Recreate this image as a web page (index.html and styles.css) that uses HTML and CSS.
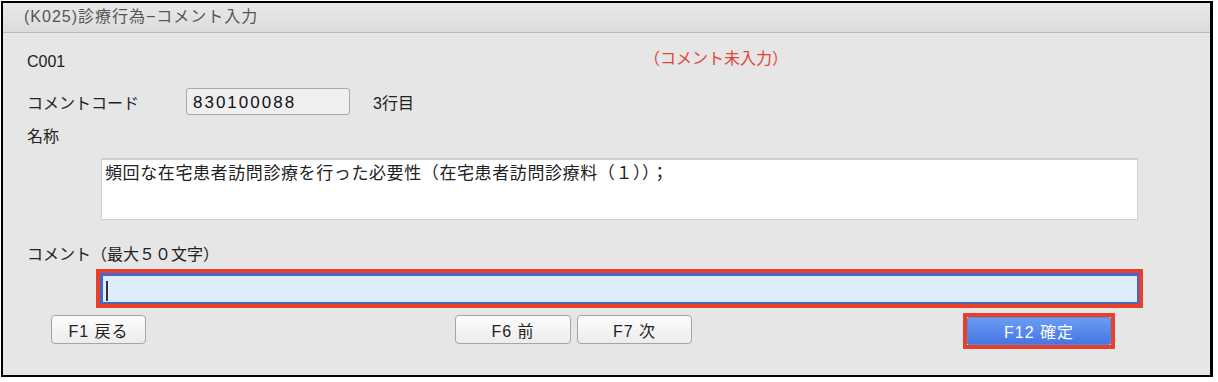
FILE: index.html
```html
<!DOCTYPE html>
<html lang="ja">
<head>
  <meta charset="UTF-8">
  <meta name="viewport" content="width=device-width, initial-scale=1.0">
  <title>(K025)診療行為−コメント入力</title>
  <link rel="stylesheet" href="styles.css">
</head>
<body>
  <div class="window">
    <!-- タイトルバー -->
    <div class="title-bar">(K025)診療行為−コメント入力</div>

    <div class="content">
      <div class="row row-code">
        <span class="code-id">C001</span>
        <span class="warn">（コメント未入力）</span>
      </div>

      <div class="row row-comment-code">
        <span class="label">コメントコード</span>
        <input type="text" class="code-input" value="830100088" readonly>
        <span class="line-no">3行目</span>
      </div>

      <div class="row row-name">
        <span class="label">名称</span>
      </div>
      <div class="name-box">頻回な在宅患者訪問診療を行った必要性（在宅患者訪問診療料（１））；</div>

      <div class="row row-comment">
        <span class="label">コメント（最大５０文字）</span>
      </div>
      <div class="comment-wrap">
        <div class="comment-input"><span class="caret"></span></div>
      </div>

      <!-- ファンクションキー -->
      <div class="buttons">
        <button class="btn btn-back">F1 戻る</button>
        <button class="btn btn-prev">F6 前</button>
        <button class="btn btn-next">F7 次</button>
        <div class="confirm-wrap">
          <button class="btn-confirm">F12 確定</button>
        </div>
      </div>
    </div>
  </div>
</body>
</html>
```

FILE: styles.css
```css
* {
  box-sizing: border-box;
}
body {
  margin: 0;
  background: #fff;
  font-family: "Liberation Sans", "Noto Sans CJK JP", sans-serif;
  font-size: 16px;
  color: #222;
}
/* ウィンドウ枠 */
.window {
  margin: 1px 0 0 1px;
  width: 1212px;
  height: 376px;
  border: 2px solid #000;
  border-right-width: 3px;
  background: #e6e6e6;
  overflow: hidden;
}
.title-bar {
  height: 30px;
  line-height: 28px;
  padding-left: 21px;
  font-size: 16px;
  letter-spacing: 1px;
  color: #555;
  background: linear-gradient(#e9e9e9, #dcdcdc);
  border-bottom: 1px solid #b9b9b9;
}
.content {
  padding-left: 24px;
}
.row {
  display: flex;
  align-items: center;
}
.row-code {
  height: 30px;
  margin-top: 14px;
}
.code-id {
  width: 617px;
}
.warn {
  color: #e4433a;
  margin-bottom: 10px;
}
.label {
  width: 159px;
  flex: none;
}
.row-comment-code {
  height: 27px;
  margin-top: 11px;
}
.code-input {
  width: 164px;
  height: 27px;
  padding: 2px 6px 0;
  font-family: inherit;
  font-size: 17px;
  letter-spacing: 2px;
  color: #111;
  background: #efefef;
  border: 1px solid #a9a9a9;
  border-radius: 3px;
}
.line-no {
  margin-left: 23px;
}
.row-name {
  height: 20px;
  margin-top: 10px;
}
.row-comment .label {
  width: auto;
}
/* 名称表示欄 */
.name-box {
  margin: 13px 0 0 74px;
  width: 1037px;
  height: 62px;
  padding: 3px 3px;
  font-size: 17px;
  letter-spacing: 0.6px;
  line-height: 22px;
  background: #fff;
  border: 2px solid #cfcfcf;
  border-width: 2px 1px 1px 1px;
}
.row-comment {
  height: 20px;
  margin-top: 23px;
}
/* コメント入力欄 */
.comment-wrap {
  margin: 6px 0 0 69px;
  width: 1047px;
  height: 39px;
  border: 4px solid #e8412b;
}
.comment-input {
  height: 100%;
  padding: 5px 0 0 3px;
  background: #deebfb;
  border: 2px solid #4468c9;
  border-width: 3px 2px 2px 3px;
}
.caret {
  display: block;
  width: 2px;
  height: 20px;
  background: #333;
}
/* ボタン */
.buttons {
  display: flex;
  align-items: flex-start;
  margin-top: 7px;
}
.btn {
  height: 29px;
  padding: 0;
  font-family: inherit;
  font-size: 16px;
  letter-spacing: 1px;
  color: #222;
  background: linear-gradient(#fdfdfd, #ececec);
  border: 1px solid #a5a5a5;
  border-radius: 4px;
}
.btn-back {
  width: 95px;
  margin-left: 24px;
}
.btn-prev {
  width: 116px;
  margin-left: 309px;
}
.btn-next {
  width: 115px;
  margin-left: 6px;
}
.confirm-wrap {
  margin: -2px 0 0 271px;
  width: 152px;
  height: 36px;
  border: 4px solid #e8412b;
}
.btn-confirm {
  display: block;
  width: 100%;
  height: 100%;
  padding: 0;
  font-family: inherit;
  font-size: 16px;
  letter-spacing: 1px;
  color: #fff;
  background: linear-gradient(#6a9cf3, #4576e4);
  border: 1px solid #5a85de;
  border-radius: 2px;
}
```
